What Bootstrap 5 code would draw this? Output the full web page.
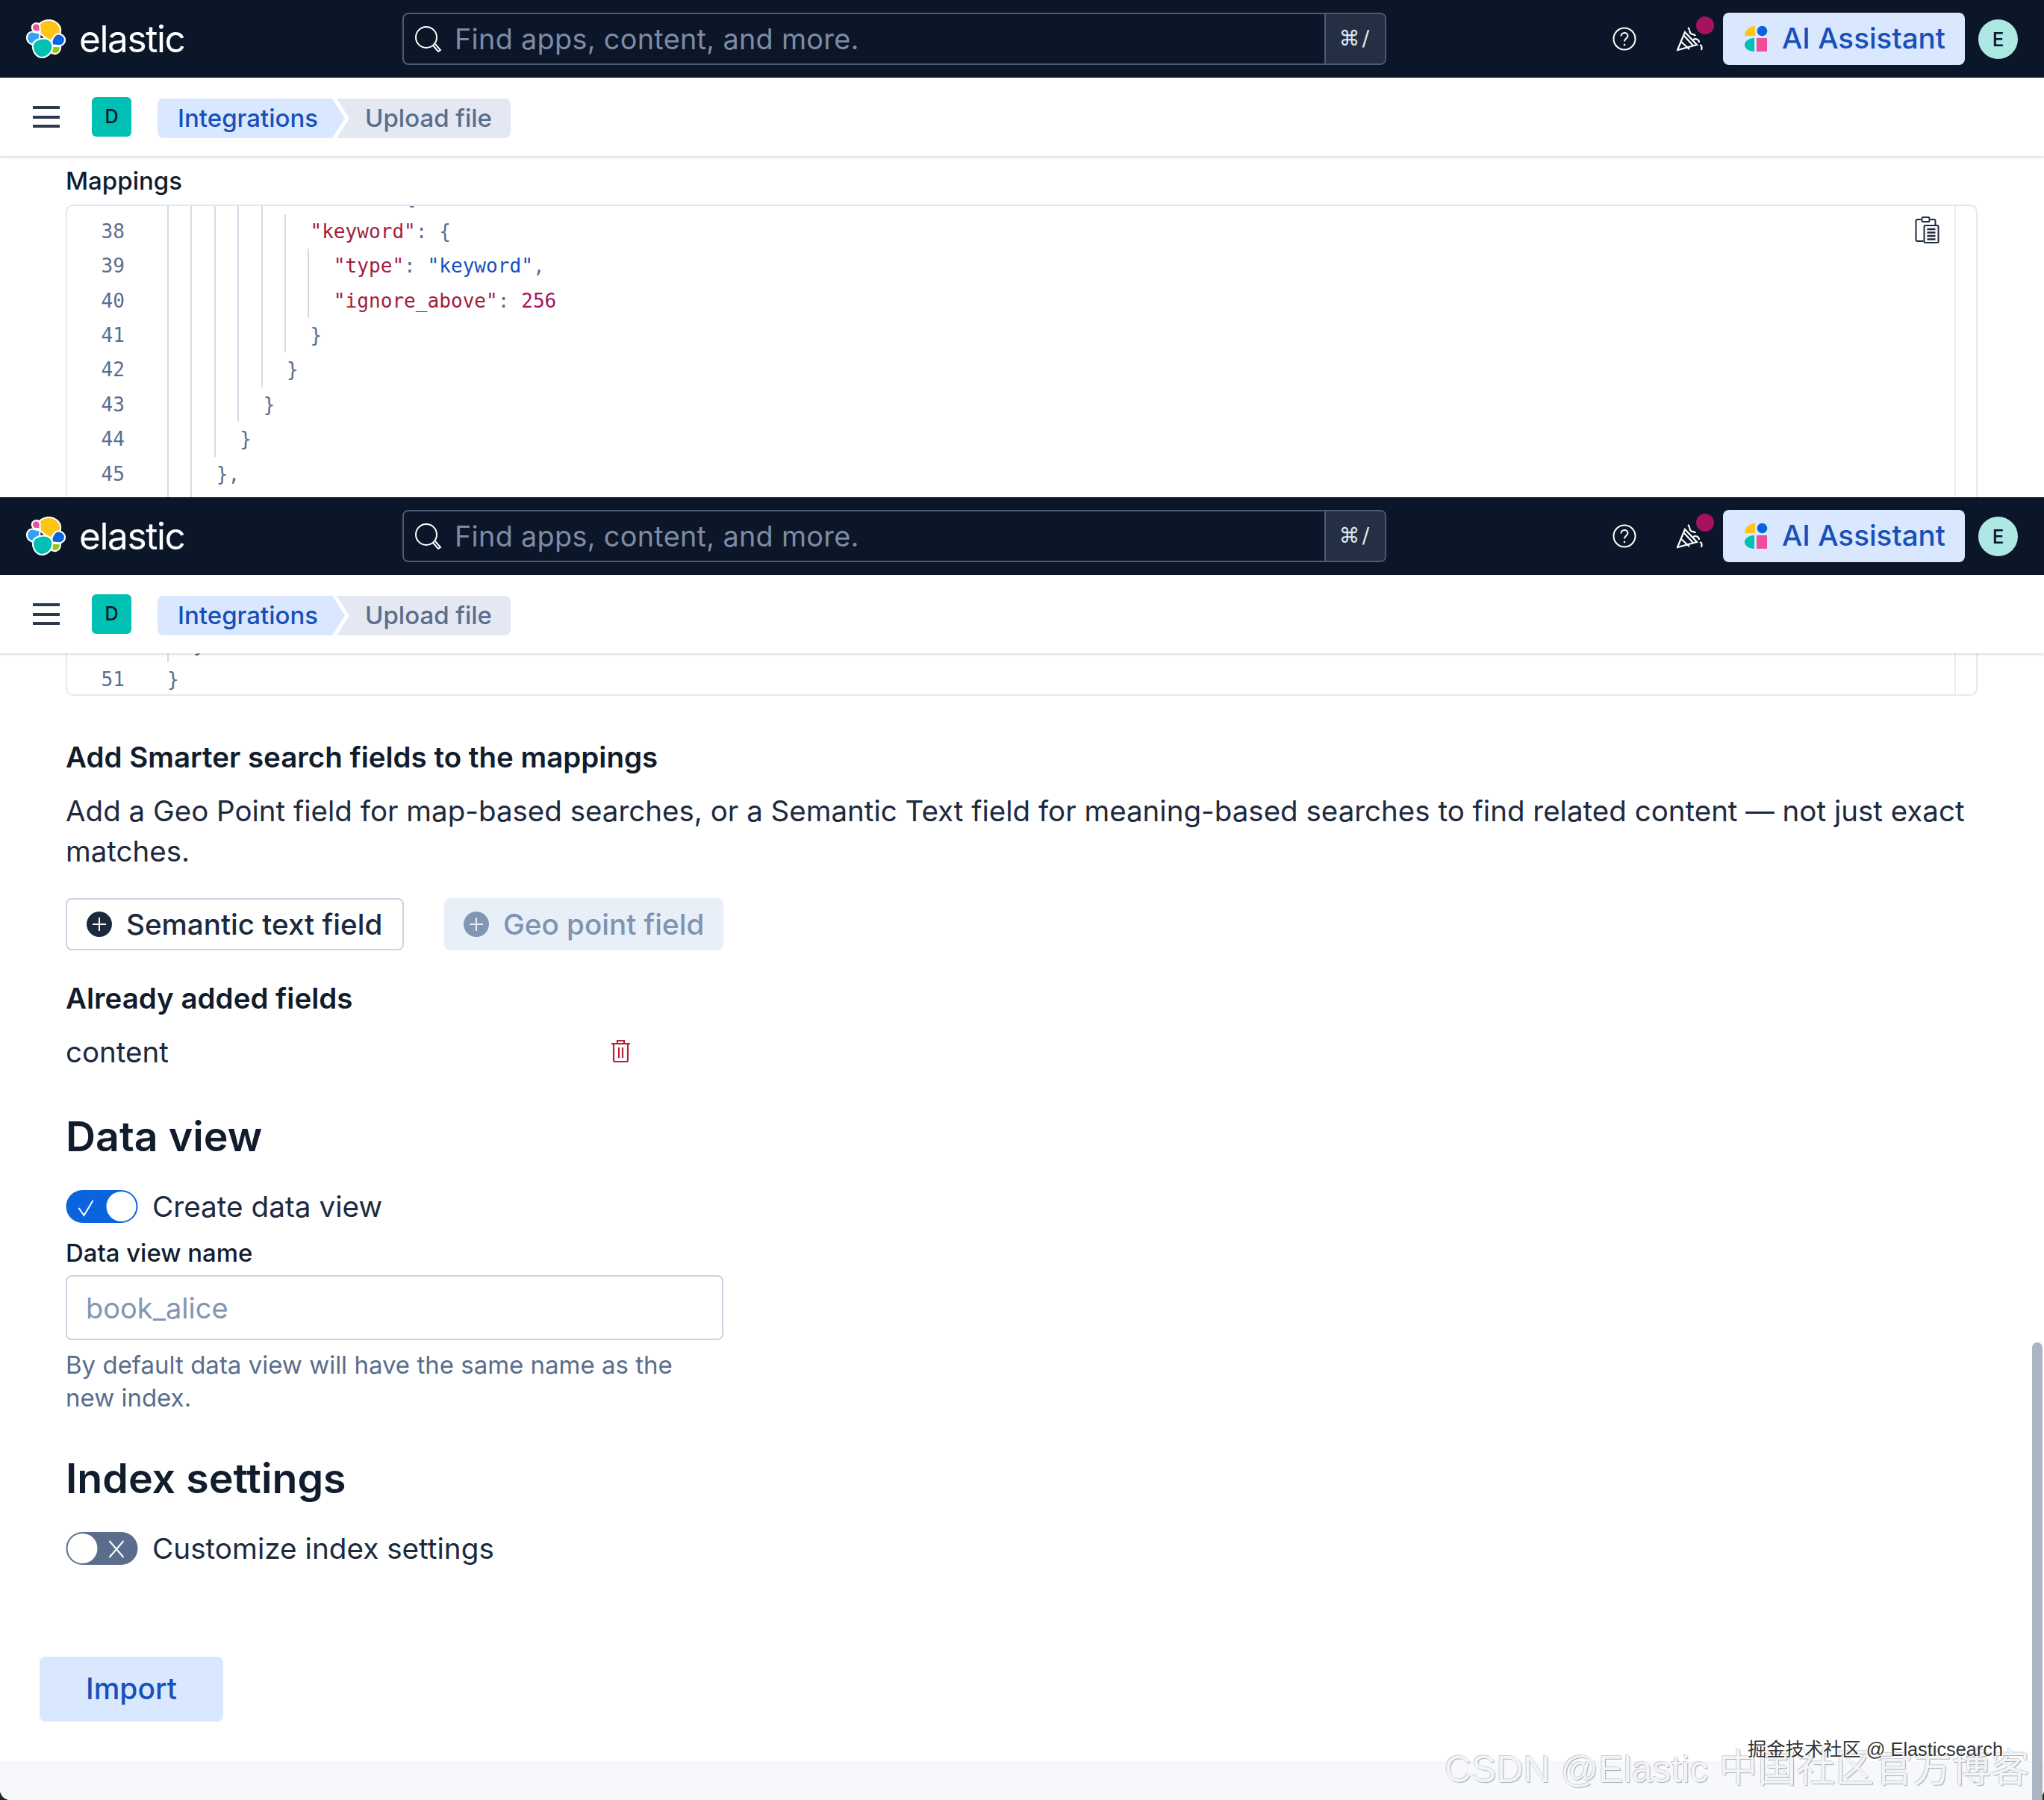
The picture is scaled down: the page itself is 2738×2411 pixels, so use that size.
<!DOCTYPE html>
<html lang="en">
<head>
<meta charset="utf-8">
<title>Upload file - Elastic</title>
<link href="https://cdn.jsdelivr.net/npm/bootstrap@5.3.0/dist/css/bootstrap.min.css" rel="stylesheet">
<style>
html,body{margin:0;height:2411px;overflow:hidden;background:#1e2a20}
body{font-family:Inter,"Noto Sans",sans-serif;color:#1d2a3e;width:2738px}
.screen-a{height:666px;overflow:hidden;background:#fff}
.screen-b{height:1745px;overflow:hidden;background:#fff;border-radius:0 0 14px 14px}
.top-bar{height:104px;background:#0b1628;padding:0;flex-wrap:nowrap;align-items:center;justify-content:flex-start}
.logo-box{width:53px;height:53px;margin-left:35px;flex:none}
.logo-word{width:433px;margin-left:18px;color:#fff;font-size:49.5px;line-height:60px;letter-spacing:-1.4px;font-weight:400;flex:none}
.search-box{width:1318px;height:70px;border:2px solid #4a5a78;border-radius:8px;overflow:hidden;flex:none}
.search-glass{width:38px;height:38px;margin-left:13px}
.search-hint{flex:1;margin-left:17px;color:#7d8ba5;font-size:37.8px;line-height:66px;letter-spacing:.3px}
.search-key{width:81px;background:#242f44;border-left:2px solid #4a5a78;color:#dfe5ef;font-family:"DejaVu Sans",sans-serif;font-size:28px;letter-spacing:3px;line-height:66px;text-align:center}
.help-ico{width:32px;height:32px;margin-left:303px;flex:none}
.party-wrap{width:62px;height:70px;margin-left:54px;flex:none}
.party-ico{position:absolute;left:0;top:16px;width:38px;height:36px}
.party-dot{position:absolute;left:26px;top:5px;width:24px;height:24px;border-radius:50%;background:#a6125f}
.ai-btn{width:324px;height:70px;flex:none;background:#d9e8ff;border:0;border-radius:8px;color:#1750ba;font-size:38.6px;font-weight:500;padding:0 0 0 29px;display:flex;align-items:center;gap:19px}
.ai-btn:hover{background:#d9e8ff;color:#1750ba}
.ai-ico{width:31px;height:34px}
.user-dot{width:53px;height:53px;margin-left:18px;flex:none;background:#ade8e4;color:#0b1628;border-radius:50%;font-size:26px;font-weight:500;line-height:53px;text-align:center}
.sub-bar{height:105px;background:#fff;box-shadow:0 2px 3px rgba(30,50,90,.16);position:relative;z-index:2}
.burger{width:36px;margin-left:44px;display:flex;flex-direction:column;gap:8.5px}
.burger i{display:block;height:4px;background:#2b394f}
.space-tile{width:53px;height:53px;margin-left:43px;background:#00bfb3;color:#0b1628;border-radius:6px;font-size:25px;font-weight:500;line-height:53px;text-align:center}
.crumbs{margin:4px 0 0 35px;height:53px;flex-wrap:nowrap}
.crumb-one{width:251px;height:53px;background:#d9e8ff;color:#1750ba;font-size:33px;font-weight:500;line-height:53px;padding-left:27px;border-radius:8px 0 0 8px;clip-path:polygon(0 0,234px 0,251px 50%,234px 100%,0 100%)}
.crumb-two{width:233px;height:53px;margin-left:-11px;background:#e3e8f2;color:#5a6d8c;font-size:33px;font-weight:500;line-height:53px;padding-left:38px;border-radius:0 8px 8px 0;clip-path:polygon(0 0,100% 0,100% 100%,0 100%,17px 50%)}
.map-title{margin:13px 0 0 88px;font-size:33px;line-height:40px;font-weight:500;color:#111c2c}
.code-frame{position:relative;width:2561px;margin:12px 0 0 88px;border:2px solid #e3e8f2;border-radius:10px;background:#fff;overflow:hidden}
.frame-a{height:500px}
.frame-b{margin-top:0;height:57px;border-top:0;border-radius:0 0 10px 10px}
.code-rail{position:absolute;top:0;bottom:0;left:2528px;width:2px;background:#e9edf3}
.scroll-a{margin-top:-35.5px}
.scroll-b{margin-top:-34px}
.code-row{display:flex;height:46.4px;line-height:46.4px;font-family:"DejaVu Sans Mono","Liberation Mono",monospace;font-size:26.1px;white-space:pre;color:#5a6d8c}
.code-num{width:134px;padding-right:57px;text-align:right;flex:none}
.ind{display:block;flex:none;width:31.42px;border-left:2px solid #d3dae6}
.ind + span{padding-left:3px}
.tk-k{color:#a31d3d}.tk-s{color:#1750ba}.tk-n{color:#a6125f}
.clip-ico{position:absolute;left:2475px;top:14px;width:33px;height:36px}
.form-pane{padding-left:88px}
.form-title{margin:58px 0 0;font-size:38.5px;line-height:48px;font-weight:600;color:#111c2c}
.form-copy{margin:21px 0 0;width:2561px;font-size:38.5px;line-height:54px;color:#1d2a3e}
.btn-row{margin-top:36px;gap:54px}
.act-btn{height:70px;display:flex;align-items:center;font-size:38.6px;font-weight:500;line-height:1;padding:0;border-radius:8px}
.act-one{width:453px;background:#fff;border:2px solid #cdd3e0;color:#1d2a3e;padding-left:26px;gap:19px}
.act-two,.act-two:disabled{width:374px;background:#e9eff8;border:0;color:#7f93b2;padding-left:26px;gap:19px;opacity:1}
.act-btn svg{width:34px;height:34px}
.fields-title{margin:40px 0 0;font-size:38.5px;line-height:48px;font-weight:600;color:#111c2c}
.field-row{margin-top:21px;width:757px;height:54px;font-size:38.5px;line-height:54px}
.trash-ico{width:27px;height:32px;margin-top:10px}
.big-title{margin:50px 0 0;font-size:55.5px;line-height:72px;font-weight:600;color:#111c2c}
.switch-row{margin-top:36px;height:44px;gap:19px;font-size:38.7px;line-height:44px}
.switch-art{width:97px;height:44px}
.name-label{margin:20px 0 0;font-size:32.9px;line-height:40px;font-weight:500;color:#111c2c;display:block}
.name-input{margin-top:10px;width:881px;height:87px;border:2px solid #cdd3e0;border-radius:8px;padding:0 25px;font-size:38px;color:#1d2a3e}
.name-input::placeholder{color:#8496b3;opacity:1}
.name-help{margin:11px 0 0;width:881px;font-size:33px;line-height:44px;color:#5a6d8c}
.import-row{padding-left:53px;margin-top:123px}
.import-btn{width:246px;height:87px;background:#d9e8ff;border:0;border-radius:8px;color:#1750ba;font-size:39px;font-weight:500}
.import-btn:hover{background:#d9e8ff;color:#1750ba}
.foot-band{height:52px;margin-top:53px;background:#f6f8fc}
.thumb-bar{position:absolute;left:2722px;top:1798px;width:14px;height:613px;background:#acb4c4;border-radius:7px 7px 0 0;z-index:3}
.mark-one{position:absolute;left:1935px;top:2332px;font-family:"Liberation Sans",sans-serif;font-size:50px;line-height:66px;white-space:nowrap;color:#f3f4f6;text-shadow:1px 1px 1px #a9adb5,-1px -1px 0 #cdd0d5;z-index:4}
.mark-cjk{font-family:"Noto Sans CJK SC",sans-serif;font-size:52px;line-height:66px}
.mark-two{position:absolute;left:2341px;top:2326px;font-family:"Liberation Sans","Noto Sans CJK SC",sans-serif;font-size:25.3px;line-height:34px;white-space:nowrap;color:#333;text-shadow:1px 1px 0 #fff,-1px -1px 0 #fff;z-index:5}
</style>
</head>
<body class="position-relative">

<div class="screen-a">
  <nav class="navbar top-bar">
    <svg class="logo-box" viewBox="0 0 54 54"><g stroke="#fff" stroke-width="2.2"><path fill="#fec514" d="M15 14C15 6 23 1 31 1c8 0 16 6 16 14 0 5-2 9-5 11l-5 4c-8-2-16-8-22-16z"/><path fill="#f04e98" d="M11 6c4-2 8 0 8 5v6l-8-1C7 14 7 8 11 6z"/><path fill="#36a2ef" d="M1 25c0-6 5-9 9-8l9 2-1 13-9 2C5 34 1 30 1 25z"/><path fill="#0b64dd" d="M42 20c6-1 11 3 11 8 0 5-4 8-8 8l-10-1c-1-5 2-13 7-15z"/><path fill="#93c90e" d="M35 36l12 1c0 6-3 10-8 10l-4-1v-10z"/><path fill="#00bfb3" d="M9 36c0-6 7-10 15-10 7 0 12 4 12 11 0 8-7 15-14 15-8 0-13-8-13-16z"/></g></svg>
    <div class="logo-word">elastic</div>
    <div class="search-box d-flex align-items-center">
      <svg class="search-glass" viewBox="0 0 38 38" fill="none" stroke="#fff" stroke-width="2"><circle cx="17" cy="17" r="14"/><path d="M26 28l7 8 3-2-7-8"/></svg>
      <div class="search-hint">Find apps, content, and more.</div>
      <div class="search-key">⌘/</div>
    </div>
    <svg class="help-ico" viewBox="0 0 32 32" fill="none" stroke="#fff" stroke-width="2"><circle cx="16" cy="16" r="14.5"/><path d="M11.5 12.5c0-6 9-6 9-.5 0 3.500-4.500 3.500-4.500 7.500"/><circle cx="16" cy="24" r="1.300" fill="#fff" stroke="none"/></svg>
    <div class="party-wrap position-relative">
      <svg class="party-ico" viewBox="0 0 38 36" fill="none" stroke="#fff" stroke-width="2.200"><path d="M1 34L11 10l16 17z"/><path d="M6 23l11 10M10 15l12 13M15 4c4 3 1 6 4 8 2 2 5 0 6 3M22 20c4-2 8 0 8 4M31 27c3 1 3 4 2 7"/></svg>
      <span class="party-dot"></span>
    </div>
    <button class="btn ai-btn" type="button"><svg class="ai-ico" viewBox="0 0 31 34"><path fill="#fec514" d="M14 0v13H0C0 6 6 0 14 0z"/><circle cx="23.500" cy="6.500" r="6.800" fill="#0b64dd"/><path fill="#00bfb3" d="M13 16v18C6 34 0 30 0 25s6-9 13-9z"/><rect x="16" y="16" width="14" height="18" fill="#f04e98"/></svg>AI Assistant</button>
    <div class="user-dot">E</div>
  </nav>
  <div class="sub-bar d-flex align-items-center">
    <div class="burger"><i></i><i></i><i></i></div>
    <div class="space-tile">D</div>
    <ol class="crumbs d-flex list-unstyled">
      <li class="crumb-one">Integrations</li>
      <li class="crumb-two">Upload file</li>
    </ol>
  </div>
  <div class="map-title">Mappings</div>
  <div class="code-frame frame-a">
    <div class="scroll-a">
      <div class="code-row"><span class="code-num"></span><i class="ind"></i><i class="ind"></i><i class="ind"></i><i class="ind"></i><i class="ind"></i><span>          {</span></div>
      <div class="code-row"><span class="code-num">38</span><i class="ind"></i><i class="ind"></i><i class="ind"></i><i class="ind"></i><i class="ind"></i><i class="ind"></i><span><span class="tk-k">"keyword"</span>: {</span></div>
      <div class="code-row"><span class="code-num">39</span><i class="ind"></i><i class="ind"></i><i class="ind"></i><i class="ind"></i><i class="ind"></i><i class="ind"></i><i class="ind"></i><span><span class="tk-k">"type"</span>: <span class="tk-s">"keyword"</span>,</span></div>
      <div class="code-row"><span class="code-num">40</span><i class="ind"></i><i class="ind"></i><i class="ind"></i><i class="ind"></i><i class="ind"></i><i class="ind"></i><i class="ind"></i><span><span class="tk-k">"ignore_above"</span>: <span class="tk-n">256</span></span></div>
      <div class="code-row"><span class="code-num">41</span><i class="ind"></i><i class="ind"></i><i class="ind"></i><i class="ind"></i><i class="ind"></i><i class="ind"></i><span>}</span></div>
      <div class="code-row"><span class="code-num">42</span><i class="ind"></i><i class="ind"></i><i class="ind"></i><i class="ind"></i><i class="ind"></i><span>}</span></div>
      <div class="code-row"><span class="code-num">43</span><i class="ind"></i><i class="ind"></i><i class="ind"></i><i class="ind"></i><span>}</span></div>
      <div class="code-row"><span class="code-num">44</span><i class="ind"></i><i class="ind"></i><i class="ind"></i><span>}</span></div>
      <div class="code-row"><span class="code-num">45</span><i class="ind"></i><i class="ind"></i><span>},</span></div>
      <div class="code-row"><span class="code-num"></span><i class="ind"></i><i class="ind"></i></div>
    </div>
    <span class="code-rail"></span>
    <svg class="clip-ico" viewBox="0 0 32 36" fill="none" stroke="#1d2a3e" stroke-width="2"><path d="M8 4H3a2 2 0 0 0-2 2v25a2 2 0 0 0 2 2h8"/><path d="M20 4h5a2 2 0 0 1 2 2v5"/><rect x="9" y="1" width="10" height="6" rx="1.500"/><rect x="12" y="12" width="19" height="23" rx="1.500"/><path d="M16 17h11M16 21.500h11M16 26h11M16 30.500h11" stroke-width="2.300"/></svg>
  </div>
</div>

<div class="screen-b">
  <nav class="navbar top-bar">
    <svg class="logo-box" viewBox="0 0 54 54"><g stroke="#fff" stroke-width="2.2"><path fill="#fec514" d="M15 14C15 6 23 1 31 1c8 0 16 6 16 14 0 5-2 9-5 11l-5 4c-8-2-16-8-22-16z"/><path fill="#f04e98" d="M11 6c4-2 8 0 8 5v6l-8-1C7 14 7 8 11 6z"/><path fill="#36a2ef" d="M1 25c0-6 5-9 9-8l9 2-1 13-9 2C5 34 1 30 1 25z"/><path fill="#0b64dd" d="M42 20c6-1 11 3 11 8 0 5-4 8-8 8l-10-1c-1-5 2-13 7-15z"/><path fill="#93c90e" d="M35 36l12 1c0 6-3 10-8 10l-4-1v-10z"/><path fill="#00bfb3" d="M9 36c0-6 7-10 15-10 7 0 12 4 12 11 0 8-7 15-14 15-8 0-13-8-13-16z"/></g></svg>
    <div class="logo-word">elastic</div>
    <div class="search-box d-flex align-items-center">
      <svg class="search-glass" viewBox="0 0 38 38" fill="none" stroke="#fff" stroke-width="2"><circle cx="17" cy="17" r="14"/><path d="M26 28l7 8 3-2-7-8"/></svg>
      <div class="search-hint">Find apps, content, and more.</div>
      <div class="search-key">⌘/</div>
    </div>
    <svg class="help-ico" viewBox="0 0 32 32" fill="none" stroke="#fff" stroke-width="2"><circle cx="16" cy="16" r="14.5"/><path d="M11.5 12.5c0-6 9-6 9-.5 0 3.500-4.500 3.500-4.500 7.500"/><circle cx="16" cy="24" r="1.300" fill="#fff" stroke="none"/></svg>
    <div class="party-wrap position-relative">
      <svg class="party-ico" viewBox="0 0 38 36" fill="none" stroke="#fff" stroke-width="2.200"><path d="M1 34L11 10l16 17z"/><path d="M6 23l11 10M10 15l12 13M15 4c4 3 1 6 4 8 2 2 5 0 6 3M22 20c4-2 8 0 8 4M31 27c3 1 3 4 2 7"/></svg>
      <span class="party-dot"></span>
    </div>
    <button class="btn ai-btn" type="button"><svg class="ai-ico" viewBox="0 0 31 34"><path fill="#fec514" d="M14 0v13H0C0 6 6 0 14 0z"/><circle cx="23.500" cy="6.500" r="6.800" fill="#0b64dd"/><path fill="#00bfb3" d="M13 16v18C6 34 0 30 0 25s6-9 13-9z"/><rect x="16" y="16" width="14" height="18" fill="#f04e98"/></svg>AI Assistant</button>
    <div class="user-dot">E</div>
  </nav>
  <div class="sub-bar d-flex align-items-center">
    <div class="burger"><i></i><i></i><i></i></div>
    <div class="space-tile">D</div>
    <ol class="crumbs d-flex list-unstyled">
      <li class="crumb-one">Integrations</li>
      <li class="crumb-two">Upload file</li>
    </ol>
  </div>
  <div class="code-frame frame-b">
    <div class="scroll-b">
      <div class="code-row"><span class="code-num"></span><i class="ind"></i><span>}</span></div>
      <div class="code-row"><span class="code-num">51</span><span>}</span></div>
    </div>
    <span class="code-rail"></span>
  </div>
  <div class="form-pane">
    <h3 class="form-title">Add Smarter search fields to the mappings</h3>
    <p class="form-copy">Add a Geo Point field for map-based searches, or a Semantic Text field for meaning-based searches to find related content — not just exact matches.</p>
    <div class="btn-row d-flex">
      <button class="btn act-btn act-one" type="button"><svg viewBox="0 0 34 34"><circle cx="17" cy="17" r="17" fill="#1d2a3e"/><path d="M17 8v18M8 17h18" stroke="#fff" stroke-width="2"/></svg>Semantic text field</button>
      <button class="btn act-btn act-two" type="button" disabled><svg viewBox="0 0 34 34"><circle cx="17" cy="17" r="17" fill="#8195b4"/><path d="M17 8v18M8 17h18" stroke="#e9eff8" stroke-width="2"/></svg>Geo point field</button>
    </div>
    <h3 class="fields-title">Already added fields</h3>
    <div class="field-row d-flex justify-content-between">
      <span>content</span>
      <svg class="trash-ico" viewBox="0 0 27 32" fill="none" stroke="#b5203a" stroke-width="2.200"><path d="M1 6h25M9 6V2h9v4M4 6v22a2 2 0 0 0 2 2h15a2 2 0 0 0 2-2V6M11 11v14M16 11v14"/></svg>
    </div>
    <h2 class="big-title">Data view</h2>
    <div class="switch-row d-flex">
      <svg class="switch-art" viewBox="0 0 96 44"><rect width="96" height="44" rx="22" fill="#0b64dd"/><ellipse cx="74" cy="22" rx="20" ry="20" fill="#fff"/><path d="M17 24l7 10L36 14" fill="none" stroke="#fff" stroke-width="2"/></svg>
      <span>Create data view</span>
    </div>
    <label class="name-label" for="viewName">Data view name</label>
    <input id="viewName" class="form-control name-input" type="text" placeholder="book_alice">
    <p class="name-help">By default data view will have the same name as the new index.</p>
    <h2 class="big-title">Index settings</h2>
    <div class="switch-row d-flex">
      <svg class="switch-art" viewBox="0 0 96 44"><rect width="96" height="44" rx="22" fill="#5a6d8c"/><ellipse cx="22" cy="22" rx="20" ry="20" fill="#fff"/><path d="M58 12l19 22M77 12L58 34" fill="none" stroke="#fff" stroke-width="2"/></svg>
      <span>Customize index settings</span>
    </div>
  </div>
  <div class="import-row"><button class="btn import-btn" type="button">Import</button></div>
  <div class="foot-band"></div>
</div>

<span class="thumb-bar"></span>
<div class="mark-one">CSDN @Elastic <span class="mark-cjk">中国社区官方博客</span></div>
<div class="mark-two">掘金技术社区 @ Elasticsearch</div>

<script src="https://cdn.jsdelivr.net/npm/bootstrap@5.3.0/dist/js/bootstrap.bundle.min.js"></script>
</body>
</html>
